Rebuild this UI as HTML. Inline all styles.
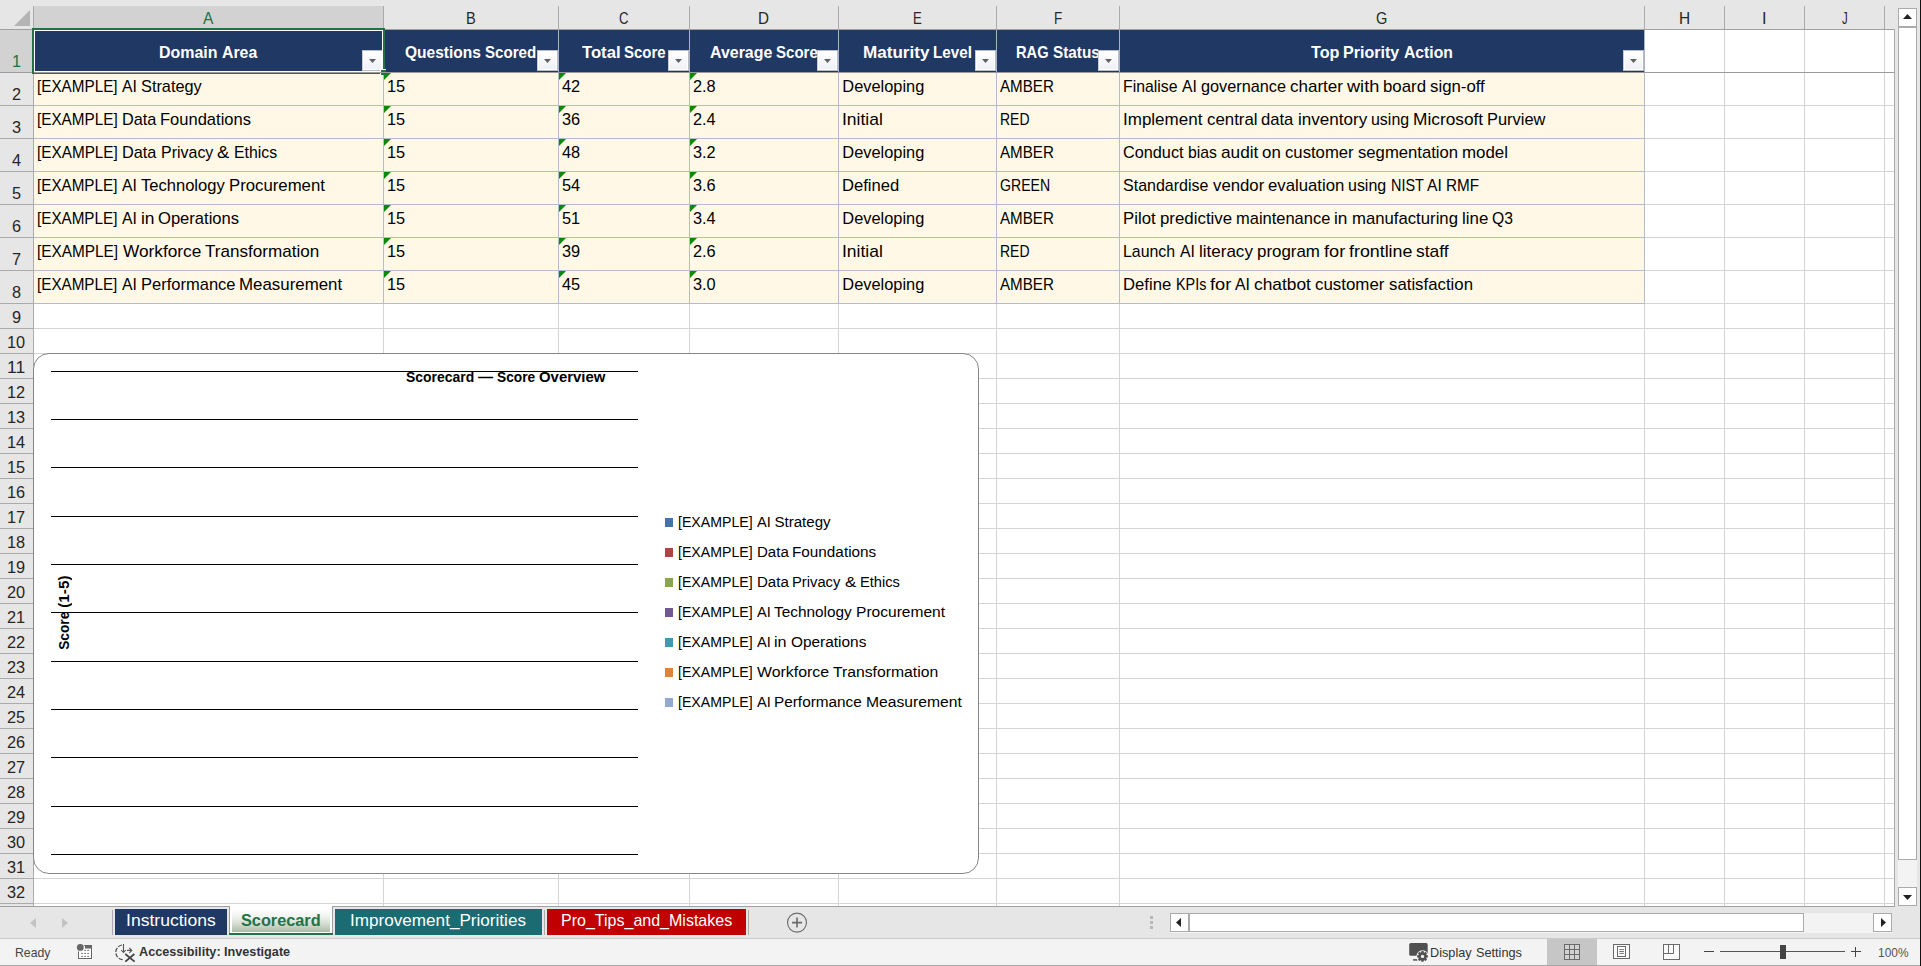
<!DOCTYPE html>
<html lang="en"><head><meta charset="utf-8"><title>Scorecard</title><style>
html,body{margin:0;padding:0}
body{width:1921px;height:966px;overflow:hidden;background:#e6e6e6;position:relative;font-family:"Liberation Sans",sans-serif;}
body>div,body>svg,body>span{position:absolute;display:block}
.t{white-space:nowrap}
.t i{display:inline-block;font-style:normal;transform-origin:0 0}
.fb{width:19px;height:19px;border:1px solid #b5bcc6;border-left-color:#c8ccd2;background:linear-gradient(#fff,#eef0f6);box-shadow:inset 0 0 0 1px #fff}
.sb{background:#fff;border:1px solid #ababab}
</style></head><body>
<div style="left:34px;top:30px;width:1860px;height:876px;background:#fff;"></div>
<div style="left:383px;top:30px;width:1px;height:876px;background:#d4d4d4;"></div>
<div style="left:558px;top:30px;width:1px;height:876px;background:#d4d4d4;"></div>
<div style="left:689px;top:30px;width:1px;height:876px;background:#d4d4d4;"></div>
<div style="left:838px;top:30px;width:1px;height:876px;background:#d4d4d4;"></div>
<div style="left:996px;top:30px;width:1px;height:876px;background:#d4d4d4;"></div>
<div style="left:1119px;top:30px;width:1px;height:876px;background:#d4d4d4;"></div>
<div style="left:1644px;top:30px;width:1px;height:876px;background:#d4d4d4;"></div>
<div style="left:1724px;top:30px;width:1px;height:876px;background:#d4d4d4;"></div>
<div style="left:1804px;top:30px;width:1px;height:876px;background:#d4d4d4;"></div>
<div style="left:1884px;top:30px;width:1px;height:876px;background:#d4d4d4;"></div>
<div style="left:34px;top:72px;width:1860px;height:1px;background:#d4d4d4;"></div>
<div style="left:34px;top:105px;width:1860px;height:1px;background:#d4d4d4;"></div>
<div style="left:34px;top:138px;width:1860px;height:1px;background:#d4d4d4;"></div>
<div style="left:34px;top:171px;width:1860px;height:1px;background:#d4d4d4;"></div>
<div style="left:34px;top:204px;width:1860px;height:1px;background:#d4d4d4;"></div>
<div style="left:34px;top:237px;width:1860px;height:1px;background:#d4d4d4;"></div>
<div style="left:34px;top:270px;width:1860px;height:1px;background:#d4d4d4;"></div>
<div style="left:34px;top:303px;width:1860px;height:1px;background:#d4d4d4;"></div>
<div style="left:34px;top:328px;width:1860px;height:1px;background:#d4d4d4;"></div>
<div style="left:34px;top:353px;width:1860px;height:1px;background:#d4d4d4;"></div>
<div style="left:34px;top:378px;width:1860px;height:1px;background:#d4d4d4;"></div>
<div style="left:34px;top:403px;width:1860px;height:1px;background:#d4d4d4;"></div>
<div style="left:34px;top:428px;width:1860px;height:1px;background:#d4d4d4;"></div>
<div style="left:34px;top:453px;width:1860px;height:1px;background:#d4d4d4;"></div>
<div style="left:34px;top:478px;width:1860px;height:1px;background:#d4d4d4;"></div>
<div style="left:34px;top:503px;width:1860px;height:1px;background:#d4d4d4;"></div>
<div style="left:34px;top:528px;width:1860px;height:1px;background:#d4d4d4;"></div>
<div style="left:34px;top:553px;width:1860px;height:1px;background:#d4d4d4;"></div>
<div style="left:34px;top:578px;width:1860px;height:1px;background:#d4d4d4;"></div>
<div style="left:34px;top:603px;width:1860px;height:1px;background:#d4d4d4;"></div>
<div style="left:34px;top:628px;width:1860px;height:1px;background:#d4d4d4;"></div>
<div style="left:34px;top:653px;width:1860px;height:1px;background:#d4d4d4;"></div>
<div style="left:34px;top:678px;width:1860px;height:1px;background:#d4d4d4;"></div>
<div style="left:34px;top:703px;width:1860px;height:1px;background:#d4d4d4;"></div>
<div style="left:34px;top:728px;width:1860px;height:1px;background:#d4d4d4;"></div>
<div style="left:34px;top:753px;width:1860px;height:1px;background:#d4d4d4;"></div>
<div style="left:34px;top:778px;width:1860px;height:1px;background:#d4d4d4;"></div>
<div style="left:34px;top:803px;width:1860px;height:1px;background:#d4d4d4;"></div>
<div style="left:34px;top:828px;width:1860px;height:1px;background:#d4d4d4;"></div>
<div style="left:34px;top:853px;width:1860px;height:1px;background:#d4d4d4;"></div>
<div style="left:34px;top:878px;width:1860px;height:1px;background:#d4d4d4;"></div>
<div style="left:34px;top:903px;width:1860px;height:1px;background:#d4d4d4;"></div>
<div style="left:0px;top:0px;width:1921px;height:29px;background:#e6e6e6;"></div>
<div style="left:34px;top:6px;width:349px;height:23px;background:#d2d2d2;"></div>
<div style="left:383px;top:6px;width:1px;height:23px;background:#ababab;"></div>
<div style="left:558px;top:6px;width:1px;height:23px;background:#ababab;"></div>
<div style="left:689px;top:6px;width:1px;height:23px;background:#ababab;"></div>
<div style="left:838px;top:6px;width:1px;height:23px;background:#ababab;"></div>
<div style="left:996px;top:6px;width:1px;height:23px;background:#ababab;"></div>
<div style="left:1119px;top:6px;width:1px;height:23px;background:#ababab;"></div>
<div style="left:1644px;top:6px;width:1px;height:23px;background:#ababab;"></div>
<div style="left:1724px;top:6px;width:1px;height:23px;background:#ababab;"></div>
<div style="left:1804px;top:6px;width:1px;height:23px;background:#ababab;"></div>
<div style="left:1884px;top:6px;width:1px;height:23px;background:#ababab;"></div>
<div style="left:0px;top:29px;width:1894px;height:1px;background:#a0a0a0;"></div>
<div style="left:0px;top:30px;width:33px;height:876px;background:#e6e6e6;"></div>
<div style="left:0px;top:30px;width:33px;height:42px;background:#d2d2d2;"></div>
<div style="left:33px;top:6px;width:1px;height:900px;background:#ababab;"></div>
<div style="left:0px;top:72px;width:33px;height:1px;background:#ababab;"></div>
<div style="left:0px;top:105px;width:33px;height:1px;background:#ababab;"></div>
<div style="left:0px;top:138px;width:33px;height:1px;background:#ababab;"></div>
<div style="left:0px;top:171px;width:33px;height:1px;background:#ababab;"></div>
<div style="left:0px;top:204px;width:33px;height:1px;background:#ababab;"></div>
<div style="left:0px;top:237px;width:33px;height:1px;background:#ababab;"></div>
<div style="left:0px;top:270px;width:33px;height:1px;background:#ababab;"></div>
<div style="left:0px;top:303px;width:33px;height:1px;background:#ababab;"></div>
<div style="left:0px;top:328px;width:33px;height:1px;background:#ababab;"></div>
<div style="left:0px;top:353px;width:33px;height:1px;background:#ababab;"></div>
<div style="left:0px;top:378px;width:33px;height:1px;background:#ababab;"></div>
<div style="left:0px;top:403px;width:33px;height:1px;background:#ababab;"></div>
<div style="left:0px;top:428px;width:33px;height:1px;background:#ababab;"></div>
<div style="left:0px;top:453px;width:33px;height:1px;background:#ababab;"></div>
<div style="left:0px;top:478px;width:33px;height:1px;background:#ababab;"></div>
<div style="left:0px;top:503px;width:33px;height:1px;background:#ababab;"></div>
<div style="left:0px;top:528px;width:33px;height:1px;background:#ababab;"></div>
<div style="left:0px;top:553px;width:33px;height:1px;background:#ababab;"></div>
<div style="left:0px;top:578px;width:33px;height:1px;background:#ababab;"></div>
<div style="left:0px;top:603px;width:33px;height:1px;background:#ababab;"></div>
<div style="left:0px;top:628px;width:33px;height:1px;background:#ababab;"></div>
<div style="left:0px;top:653px;width:33px;height:1px;background:#ababab;"></div>
<div style="left:0px;top:678px;width:33px;height:1px;background:#ababab;"></div>
<div style="left:0px;top:703px;width:33px;height:1px;background:#ababab;"></div>
<div style="left:0px;top:728px;width:33px;height:1px;background:#ababab;"></div>
<div style="left:0px;top:753px;width:33px;height:1px;background:#ababab;"></div>
<div style="left:0px;top:778px;width:33px;height:1px;background:#ababab;"></div>
<div style="left:0px;top:803px;width:33px;height:1px;background:#ababab;"></div>
<div style="left:0px;top:828px;width:33px;height:1px;background:#ababab;"></div>
<div style="left:0px;top:853px;width:33px;height:1px;background:#ababab;"></div>
<div style="left:0px;top:878px;width:33px;height:1px;background:#ababab;"></div>
<div style="left:0px;top:903px;width:33px;height:1px;background:#ababab;"></div>
<svg style="left:14px;top:10px" width="17" height="17" viewBox="0 0 17 17"><path d="M16 0V16H0Z" fill="#b4b4b4"/></svg>
<span class="t" style="left:203.32px;top:8.32px;font-size:16.4px;line-height:20px;color:#217346;"><i style="width:10.37px;transform:scaleX(0.9480)">A</i></span>
<span class="t" style="left:466.13px;top:8.32px;font-size:16.4px;line-height:20px;color:#262626;"><i style="width:9.75px;transform:scaleX(0.8912)">B</i></span>
<span class="t" style="left:619.22px;top:8.32px;font-size:16.4px;line-height:20px;color:#262626;"><i style="width:9.56px;transform:scaleX(0.8068)">C</i></span>
<span class="t" style="left:758.49px;top:8.32px;font-size:16.4px;line-height:20px;color:#262626;"><i style="width:11.03px;transform:scaleX(0.9309)">D</i></span>
<span class="t" style="left:913.12px;top:8.32px;font-size:16.4px;line-height:20px;color:#262626;"><i style="width:8.75px;transform:scaleX(0.8000)">E</i></span>
<span class="t" style="left:1053.88px;top:8.32px;font-size:16.4px;line-height:20px;color:#262626;"><i style="width:8.23px;transform:scaleX(0.8221)">F</i></span>
<span class="t" style="left:1376.35px;top:8.32px;font-size:16.4px;line-height:20px;color:#262626;"><i style="width:11.31px;transform:scaleX(0.8867)">G</i></span>
<span class="t" style="left:1678.92px;top:8.32px;font-size:16.4px;line-height:20px;color:#262626;"><i style="width:11.17px;transform:scaleX(0.9427)">H</i></span>
<span class="t" style="left:1762.24px;top:8.32px;font-size:16.4px;line-height:20px;color:#262626;"><i style="width:4.52px;transform:scaleX(0.9896)">I</i></span>
<span class="t" style="left:1841.64px;top:8.32px;font-size:16.4px;line-height:20px;color:#262626;"><i style="width:5.71px;transform:scaleX(0.6965)">J</i></span>
<span class="t" style="left:11.96px;top:51.32px;font-size:16.4px;line-height:20px;color:#217346;"><i style="width:9.08px;transform:scaleX(0.9953)">1</i></span>
<span class="t" style="left:11.96px;top:84.32px;font-size:16.4px;line-height:20px;color:#262626;"><i style="width:9.08px;transform:scaleX(0.9953)">2</i></span>
<span class="t" style="left:11.96px;top:117.32px;font-size:16.4px;line-height:20px;color:#262626;"><i style="width:9.08px;transform:scaleX(0.9953)">3</i></span>
<span class="t" style="left:11.96px;top:150.32px;font-size:16.4px;line-height:20px;color:#262626;"><i style="width:9.08px;transform:scaleX(0.9953)">4</i></span>
<span class="t" style="left:11.96px;top:183.32px;font-size:16.4px;line-height:20px;color:#262626;"><i style="width:9.08px;transform:scaleX(0.9953)">5</i></span>
<span class="t" style="left:11.96px;top:216.32px;font-size:16.4px;line-height:20px;color:#262626;"><i style="width:9.08px;transform:scaleX(0.9953)">6</i></span>
<span class="t" style="left:11.96px;top:249.32px;font-size:16.4px;line-height:20px;color:#262626;"><i style="width:9.08px;transform:scaleX(0.9953)">7</i></span>
<span class="t" style="left:11.96px;top:282.32px;font-size:16.4px;line-height:20px;color:#262626;"><i style="width:9.08px;transform:scaleX(0.9953)">8</i></span>
<span class="t" style="left:11.96px;top:307.32px;font-size:16.4px;line-height:20px;color:#262626;"><i style="width:9.08px;transform:scaleX(0.9953)">9</i></span>
<span class="t" style="left:7.42px;top:332.32px;font-size:16.4px;line-height:20px;color:#262626;"><i style="width:18.17px;transform:scaleX(0.9962)">10</i></span>
<span class="t" style="left:7.42px;top:357.32px;font-size:16.4px;line-height:20px;color:#262626;"><i style="width:18.17px;transform:scaleX(1.0675)">11</i></span>
<span class="t" style="left:7.42px;top:382.32px;font-size:16.4px;line-height:20px;color:#262626;"><i style="width:18.17px;transform:scaleX(0.9962)">12</i></span>
<span class="t" style="left:7.42px;top:407.32px;font-size:16.4px;line-height:20px;color:#262626;"><i style="width:18.17px;transform:scaleX(0.9962)">13</i></span>
<span class="t" style="left:7.42px;top:432.32px;font-size:16.4px;line-height:20px;color:#262626;"><i style="width:18.17px;transform:scaleX(0.9962)">14</i></span>
<span class="t" style="left:7.42px;top:457.32px;font-size:16.4px;line-height:20px;color:#262626;"><i style="width:18.17px;transform:scaleX(0.9962)">15</i></span>
<span class="t" style="left:7.42px;top:482.32px;font-size:16.4px;line-height:20px;color:#262626;"><i style="width:18.17px;transform:scaleX(0.9962)">16</i></span>
<span class="t" style="left:7.42px;top:507.32px;font-size:16.4px;line-height:20px;color:#262626;"><i style="width:18.17px;transform:scaleX(0.9962)">17</i></span>
<span class="t" style="left:7.42px;top:532.32px;font-size:16.4px;line-height:20px;color:#262626;"><i style="width:18.17px;transform:scaleX(0.9962)">18</i></span>
<span class="t" style="left:7.42px;top:557.32px;font-size:16.4px;line-height:20px;color:#262626;"><i style="width:18.17px;transform:scaleX(0.9962)">19</i></span>
<span class="t" style="left:7.42px;top:582.32px;font-size:16.4px;line-height:20px;color:#262626;"><i style="width:18.17px;transform:scaleX(0.9962)">20</i></span>
<span class="t" style="left:7.42px;top:607.32px;font-size:16.4px;line-height:20px;color:#262626;"><i style="width:18.17px;transform:scaleX(0.9962)">21</i></span>
<span class="t" style="left:7.42px;top:632.32px;font-size:16.4px;line-height:20px;color:#262626;"><i style="width:18.17px;transform:scaleX(0.9962)">22</i></span>
<span class="t" style="left:7.42px;top:657.32px;font-size:16.4px;line-height:20px;color:#262626;"><i style="width:18.17px;transform:scaleX(0.9962)">23</i></span>
<span class="t" style="left:7.42px;top:682.32px;font-size:16.4px;line-height:20px;color:#262626;"><i style="width:18.17px;transform:scaleX(0.9962)">24</i></span>
<span class="t" style="left:7.42px;top:707.32px;font-size:16.4px;line-height:20px;color:#262626;"><i style="width:18.17px;transform:scaleX(0.9962)">25</i></span>
<span class="t" style="left:7.42px;top:732.32px;font-size:16.4px;line-height:20px;color:#262626;"><i style="width:18.17px;transform:scaleX(0.9962)">26</i></span>
<span class="t" style="left:7.42px;top:757.32px;font-size:16.4px;line-height:20px;color:#262626;"><i style="width:18.17px;transform:scaleX(0.9962)">27</i></span>
<span class="t" style="left:7.42px;top:782.32px;font-size:16.4px;line-height:20px;color:#262626;"><i style="width:18.17px;transform:scaleX(0.9962)">28</i></span>
<span class="t" style="left:7.42px;top:807.32px;font-size:16.4px;line-height:20px;color:#262626;"><i style="width:18.17px;transform:scaleX(0.9962)">29</i></span>
<span class="t" style="left:7.42px;top:832.32px;font-size:16.4px;line-height:20px;color:#262626;"><i style="width:18.17px;transform:scaleX(0.9962)">30</i></span>
<span class="t" style="left:7.42px;top:857.32px;font-size:16.4px;line-height:20px;color:#262626;"><i style="width:18.17px;transform:scaleX(0.9962)">31</i></span>
<span class="t" style="left:7.42px;top:882.32px;font-size:16.4px;line-height:20px;color:#262626;"><i style="width:18.17px;transform:scaleX(0.9962)">32</i></span>
<div style="left:34px;top:30px;width:1610px;height:42px;background:#1f3864;"></div>
<div style="left:383px;top:30px;width:1px;height:42px;background:#aab2c4;"></div>
<div style="left:558px;top:30px;width:1px;height:42px;background:#aab2c4;"></div>
<div style="left:689px;top:30px;width:1px;height:42px;background:#aab2c4;"></div>
<div style="left:838px;top:30px;width:1px;height:42px;background:#aab2c4;"></div>
<div style="left:996px;top:30px;width:1px;height:42px;background:#aab2c4;"></div>
<div style="left:1119px;top:30px;width:1px;height:42px;background:#aab2c4;"></div>
<div style="left:1644px;top:30px;width:1px;height:42px;background:#aab2c4;"></div>
<div style="left:34px;top:73px;width:1610px;height:230px;background:#fff8e6;"></div>
<div style="left:383px;top:73px;width:1px;height:231px;background:#b4bcc9;"></div>
<div style="left:558px;top:73px;width:1px;height:231px;background:#b4bcc9;"></div>
<div style="left:689px;top:73px;width:1px;height:231px;background:#b4bcc9;"></div>
<div style="left:838px;top:73px;width:1px;height:231px;background:#b4bcc9;"></div>
<div style="left:996px;top:73px;width:1px;height:231px;background:#b4bcc9;"></div>
<div style="left:1119px;top:73px;width:1px;height:231px;background:#b4bcc9;"></div>
<div style="left:1644px;top:73px;width:1px;height:231px;background:#b4bcc9;"></div>
<div style="left:34px;top:105px;width:1611px;height:1px;background:#b4bcc9;"></div>
<div style="left:34px;top:138px;width:1611px;height:1px;background:#b4bcc9;"></div>
<div style="left:34px;top:171px;width:1611px;height:1px;background:#b4bcc9;"></div>
<div style="left:34px;top:204px;width:1611px;height:1px;background:#b4bcc9;"></div>
<div style="left:34px;top:237px;width:1611px;height:1px;background:#b4bcc9;"></div>
<div style="left:34px;top:270px;width:1611px;height:1px;background:#b4bcc9;"></div>
<div style="left:34px;top:303px;width:1611px;height:1px;background:#b4bcc9;"></div>
<div style="left:34px;top:72px;width:1860px;height:1px;background:#9b9b9b;"></div>
<div style="left:0px;top:72px;width:33px;height:1px;background:#9b9b9b;"></div>
<span class="t" style="left:159.30px;top:42.32px;font-size:16.4px;line-height:20px;color:#fff;font-weight:bold;word-spacing:-0.50px;"><i style="width:58.54px;transform:scaleX(0.9739)">Domain</i> <i style="width:35.20px;transform:scaleX(0.9656)">Area</i></span>
<div class="fb" style="left:362px;top:50px"></div>
<svg style="left:369px;top:59px" width="7" height="4" viewBox="0 0 7 4"><path d="M0 0H7L3.5 4Z" fill="#606060"/></svg>
<span class="t" style="left:405.10px;top:42.32px;font-size:16.4px;line-height:20px;color:#fff;font-weight:bold;word-spacing:-0.46px;"><i style="width:75.93px;transform:scaleX(0.9473)">Questions</i> <i style="width:51.17px;transform:scaleX(0.9208)">Scored</i></span>
<div class="fb" style="left:537px;top:50px"></div>
<svg style="left:544px;top:59px" width="7" height="4" viewBox="0 0 7 4"><path d="M0 0H7L3.5 4Z" fill="#606060"/></svg>
<span class="t" style="left:581.55px;top:42.32px;font-size:16.4px;line-height:20px;color:#fff;font-weight:bold;word-spacing:-0.45px;"><i style="width:38.56px;transform:scaleX(1.0163)">Total</i> <i style="width:41.63px;transform:scaleX(0.9137)">Score</i></span>
<div class="fb" style="left:668px;top:50px"></div>
<svg style="left:675px;top:59px" width="7" height="4" viewBox="0 0 7 4"><path d="M0 0H7L3.5 4Z" fill="#606060"/></svg>
<span class="t" style="left:709.60px;top:42.32px;font-size:16.4px;line-height:20px;color:#fff;font-weight:bold;word-spacing:-0.43px;"><i style="width:62.28px;transform:scaleX(0.9717)">Average</i> <i style="width:41.79px;transform:scaleX(0.9172)">Score</i></span>
<div class="fb" style="left:817px;top:50px"></div>
<svg style="left:824px;top:59px" width="7" height="4" viewBox="0 0 7 4"><path d="M0 0H7L3.5 4Z" fill="#606060"/></svg>
<span class="t" style="left:862.50px;top:42.32px;font-size:16.4px;line-height:20px;color:#fff;font-weight:bold;word-spacing:-0.47px;"><i style="width:66.44px;transform:scaleX(1.0422)">Maturity</i> <i style="width:38.87px;transform:scaleX(0.9272)">Level</i></span>
<div class="fb" style="left:975px;top:50px"></div>
<svg style="left:982px;top:59px" width="7" height="4" viewBox="0 0 7 4"><path d="M0 0H7L3.5 4Z" fill="#606060"/></svg>
<span class="t" style="left:1016.00px;top:42.32px;font-size:16.4px;line-height:20px;color:#fff;font-weight:bold;word-spacing:-0.48px;"><i style="width:32.55px;transform:scaleX(0.8934)">RAG</i> <i style="width:46.77px;transform:scaleX(0.9337)">Status</i></span>
<div class="fb" style="left:1098px;top:50px"></div>
<svg style="left:1105px;top:59px" width="7" height="4" viewBox="0 0 7 4"><path d="M0 0H7L3.5 4Z" fill="#606060"/></svg>
<span class="t" style="left:1310.85px;top:42.32px;font-size:16.4px;line-height:20px;color:#fff;font-weight:bold;word-spacing:-0.45px;"><i style="width:28.49px;transform:scaleX(0.9884)">Top</i> <i style="width:56.14px;transform:scaleX(0.9783)">Priority</i> <i style="width:48.86px;transform:scaleX(0.9580)">Action</i></span>
<div class="fb" style="left:1623px;top:50px"></div>
<svg style="left:1630px;top:59px" width="7" height="4" viewBox="0 0 7 4"><path d="M0 0H7L3.5 4Z" fill="#606060"/></svg>
<span class="t" style="left:37.30px;top:76.32px;font-size:16.4px;line-height:20px;color:#000;word-spacing:-0.49px;"><i style="width:80.57px;transform:scaleX(0.9310)">[EXAMPLE]</i> <i style="width:14.94px;transform:scaleX(0.9638)">AI</i> <i style="width:60.76px;transform:scaleX(0.9953)">Strategy</i></span>
<span class="t" style="left:387.30px;top:76.32px;font-size:16.4px;line-height:20px;color:#000;"><i style="width:18.17px;transform:scaleX(0.9962)">15</i></span>
<svg style="left:384px;top:73px" width="7" height="7" viewBox="0 0 7 7"><path d="M0 0H7L0 7Z" fill="#0a8a0a"/></svg>
<span class="t" style="left:562.30px;top:76.32px;font-size:16.4px;line-height:20px;color:#000;"><i style="width:18.17px;transform:scaleX(0.9962)">42</i></span>
<svg style="left:559px;top:73px" width="7" height="7" viewBox="0 0 7 7"><path d="M0 0H7L0 7Z" fill="#0a8a0a"/></svg>
<span class="t" style="left:693.30px;top:76.32px;font-size:16.4px;line-height:20px;color:#000;"><i style="width:22.69px;transform:scaleX(0.9953)">2.8</i></span>
<svg style="left:690px;top:73px" width="7" height="7" viewBox="0 0 7 7"><path d="M0 0H7L0 7Z" fill="#0a8a0a"/></svg>
<span class="t" style="left:842.30px;top:76.32px;font-size:16.4px;line-height:20px;color:#000;"><i style="width:81.89px;">Developing</i></span>
<span class="t" style="left:1000.30px;top:76.32px;font-size:16.4px;line-height:20px;color:#000;"><i style="width:53.92px;transform:scaleX(0.9249)">AMBER</i></span>
<span class="t" style="left:1123.30px;top:76.32px;font-size:16.4px;line-height:20px;color:#000;word-spacing:-0.51px;"><i style="width:54.45px;transform:scaleX(0.9639)">Finalise</i> <i style="width:14.87px;transform:scaleX(0.9594)">AI</i> <i style="width:84.97px;transform:scaleX(0.9919)">governance</i> <i style="width:52.94px;transform:scaleX(1.0378)">charter</i> <i style="width:32.31px;transform:scaleX(1.1082)">with</i> <i style="width:43.07px;transform:scaleX(1.0275)">board</i> <i style="width:54.80px;transform:scaleX(1.0248)">sign-off</i></span>
<span class="t" style="left:37.30px;top:109.32px;font-size:16.4px;line-height:20px;color:#000;word-spacing:-0.49px;"><i style="width:80.66px;transform:scaleX(0.9320)">[EXAMPLE]</i> <i style="width:34.36px;transform:scaleX(0.9923)">Data</i> <i style="width:90.94px;transform:scaleX(1.0080)">Foundations</i></span>
<span class="t" style="left:387.30px;top:109.32px;font-size:16.4px;line-height:20px;color:#000;"><i style="width:18.17px;transform:scaleX(0.9962)">15</i></span>
<svg style="left:384px;top:106px" width="7" height="7" viewBox="0 0 7 7"><path d="M0 0H7L0 7Z" fill="#0a8a0a"/></svg>
<span class="t" style="left:562.30px;top:109.32px;font-size:16.4px;line-height:20px;color:#000;"><i style="width:18.17px;transform:scaleX(0.9962)">36</i></span>
<svg style="left:559px;top:106px" width="7" height="7" viewBox="0 0 7 7"><path d="M0 0H7L0 7Z" fill="#0a8a0a"/></svg>
<span class="t" style="left:693.30px;top:109.32px;font-size:16.4px;line-height:20px;color:#000;"><i style="width:22.69px;transform:scaleX(0.9953)">2.4</i></span>
<svg style="left:690px;top:106px" width="7" height="7" viewBox="0 0 7 7"><path d="M0 0H7L0 7Z" fill="#0a8a0a"/></svg>
<span class="t" style="left:842.30px;top:109.32px;font-size:16.4px;line-height:20px;color:#000;"><i style="width:40.85px;transform:scaleX(1.0676)">Initial</i></span>
<span class="t" style="left:1000.30px;top:109.32px;font-size:16.4px;line-height:20px;color:#000;"><i style="width:29.51px;transform:scaleX(0.8525)">RED</i></span>
<span class="t" style="left:1123.30px;top:109.32px;font-size:16.4px;line-height:20px;color:#000;word-spacing:-0.54px;"><i style="width:79.38px;transform:scaleX(1.0372)">Implement</i> <i style="width:50.51px;transform:scaleX(1.0265)">central</i> <i style="width:32.36px;transform:scaleX(1.0143)">data</i> <i style="width:69.29px;transform:scaleX(1.0417)">inventory</i> <i style="width:38.12px;transform:scaleX(0.9728)">using</i> <i style="width:70.16px;transform:scaleX(1.0552)">Microsoft</i> <i style="width:58.45px;transform:scaleX(1.0026)">Purview</i></span>
<span class="t" style="left:37.30px;top:142.32px;font-size:16.4px;line-height:20px;color:#000;word-spacing:-0.48px;"><i style="width:80.83px;transform:scaleX(0.9340)">[EXAMPLE]</i> <i style="width:34.43px;transform:scaleX(0.9945)">Data</i> <i style="width:52.35px;transform:scaleX(0.9742)">Privacy</i> <i style="width:12.31px;transform:scaleX(1.1254)">&amp;</i> <i style="width:43.16px;transform:scaleX(0.9669)">Ethics</i></span>
<span class="t" style="left:387.30px;top:142.32px;font-size:16.4px;line-height:20px;color:#000;"><i style="width:18.17px;transform:scaleX(0.9962)">15</i></span>
<svg style="left:384px;top:139px" width="7" height="7" viewBox="0 0 7 7"><path d="M0 0H7L0 7Z" fill="#0a8a0a"/></svg>
<span class="t" style="left:562.30px;top:142.32px;font-size:16.4px;line-height:20px;color:#000;"><i style="width:18.17px;transform:scaleX(0.9962)">48</i></span>
<svg style="left:559px;top:139px" width="7" height="7" viewBox="0 0 7 7"><path d="M0 0H7L0 7Z" fill="#0a8a0a"/></svg>
<span class="t" style="left:693.30px;top:142.32px;font-size:16.4px;line-height:20px;color:#000;"><i style="width:22.69px;transform:scaleX(0.9953)">3.2</i></span>
<svg style="left:690px;top:139px" width="7" height="7" viewBox="0 0 7 7"><path d="M0 0H7L0 7Z" fill="#0a8a0a"/></svg>
<span class="t" style="left:842.30px;top:142.32px;font-size:16.4px;line-height:20px;color:#000;"><i style="width:81.89px;">Developing</i></span>
<span class="t" style="left:1000.30px;top:142.32px;font-size:16.4px;line-height:20px;color:#000;"><i style="width:53.92px;transform:scaleX(0.9249)">AMBER</i></span>
<span class="t" style="left:1123.30px;top:142.32px;font-size:16.4px;line-height:20px;color:#000;word-spacing:-0.53px;"><i style="width:60.57px;transform:scaleX(0.9919)">Conduct</i> <i style="width:28.99px;transform:scaleX(0.9640)">bias</i> <i style="width:37.37px;transform:scaleX(1.0512)">audit</i> <i style="width:18.78px;transform:scaleX(1.0301)">on</i> <i style="width:68.64px;transform:scaleX(1.0182)">customer</i> <i style="width:100.14px;transform:scaleX(1.0174)">segmentation</i> <i style="width:46.01px;transform:scaleX(1.0303)">model</i></span>
<span class="t" style="left:37.30px;top:175.32px;font-size:16.4px;line-height:20px;color:#000;word-spacing:-0.50px;"><i style="width:80.39px;transform:scaleX(0.9288)">[EXAMPLE]</i> <i style="width:14.91px;transform:scaleX(0.9616)">AI</i> <i style="width:83.74px;transform:scaleX(1.0098)">Technology</i> <i style="width:95.90px;transform:scaleX(1.0219)">Procurement</i></span>
<span class="t" style="left:387.30px;top:175.32px;font-size:16.4px;line-height:20px;color:#000;"><i style="width:18.17px;transform:scaleX(0.9962)">15</i></span>
<svg style="left:384px;top:172px" width="7" height="7" viewBox="0 0 7 7"><path d="M0 0H7L0 7Z" fill="#0a8a0a"/></svg>
<span class="t" style="left:562.30px;top:175.32px;font-size:16.4px;line-height:20px;color:#000;"><i style="width:18.17px;transform:scaleX(0.9962)">54</i></span>
<svg style="left:559px;top:172px" width="7" height="7" viewBox="0 0 7 7"><path d="M0 0H7L0 7Z" fill="#0a8a0a"/></svg>
<span class="t" style="left:693.30px;top:175.32px;font-size:16.4px;line-height:20px;color:#000;"><i style="width:22.69px;transform:scaleX(0.9953)">3.6</i></span>
<svg style="left:690px;top:172px" width="7" height="7" viewBox="0 0 7 7"><path d="M0 0H7L0 7Z" fill="#0a8a0a"/></svg>
<span class="t" style="left:842.30px;top:175.32px;font-size:16.4px;line-height:20px;color:#000;"><i style="width:57.27px;transform:scaleX(1.0136)">Defined</i></span>
<span class="t" style="left:1000.30px;top:175.32px;font-size:16.4px;line-height:20px;color:#000;"><i style="width:50.10px;transform:scaleX(0.8594)">GREEN</i></span>
<span class="t" style="left:1123.30px;top:175.32px;font-size:16.4px;line-height:20px;color:#000;word-spacing:-0.53px;"><i style="width:85.46px;transform:scaleX(0.9769)">Standardise</i> <i style="width:51.25px;transform:scaleX(1.0225)">vendor</i> <i style="width:76.26px;transform:scaleX(1.0205)">evaluation</i> <i style="width:38.18px;transform:scaleX(0.9742)">using</i> <i style="width:32.87px;transform:scaleX(0.8801)">NIST</i> <i style="width:14.80px;transform:scaleX(0.9550)">AI</i> <i style="width:33.10px;transform:scaleX(0.9320)">RMF</i></span>
<span class="t" style="left:37.30px;top:208.32px;font-size:16.4px;line-height:20px;color:#000;word-spacing:-0.50px;"><i style="width:80.37px;transform:scaleX(0.9286)">[EXAMPLE]</i> <i style="width:14.90px;transform:scaleX(0.9614)">AI</i> <i style="width:13.54px;transform:scaleX(1.0610)">in</i> <i style="width:81.12px;transform:scaleX(1.0116)">Operations</i></span>
<span class="t" style="left:387.30px;top:208.32px;font-size:16.4px;line-height:20px;color:#000;"><i style="width:18.17px;transform:scaleX(0.9962)">15</i></span>
<svg style="left:384px;top:205px" width="7" height="7" viewBox="0 0 7 7"><path d="M0 0H7L0 7Z" fill="#0a8a0a"/></svg>
<span class="t" style="left:562.30px;top:208.32px;font-size:16.4px;line-height:20px;color:#000;"><i style="width:18.17px;transform:scaleX(0.9962)">51</i></span>
<svg style="left:559px;top:205px" width="7" height="7" viewBox="0 0 7 7"><path d="M0 0H7L0 7Z" fill="#0a8a0a"/></svg>
<span class="t" style="left:693.30px;top:208.32px;font-size:16.4px;line-height:20px;color:#000;"><i style="width:22.69px;transform:scaleX(0.9953)">3.4</i></span>
<svg style="left:690px;top:205px" width="7" height="7" viewBox="0 0 7 7"><path d="M0 0H7L0 7Z" fill="#0a8a0a"/></svg>
<span class="t" style="left:842.30px;top:208.32px;font-size:16.4px;line-height:20px;color:#000;"><i style="width:81.89px;">Developing</i></span>
<span class="t" style="left:1000.30px;top:208.32px;font-size:16.4px;line-height:20px;color:#000;"><i style="width:53.92px;transform:scaleX(0.9249)">AMBER</i></span>
<span class="t" style="left:1123.30px;top:208.32px;font-size:16.4px;line-height:20px;color:#000;word-spacing:-0.55px;"><i style="width:32.62px;transform:scaleX(1.0227)">Pilot</i> <i style="width:72.10px;transform:scaleX(1.0278)">predictive</i> <i style="width:94.33px;transform:scaleX(1.0050)">maintenance</i> <i style="width:13.40px;transform:scaleX(1.0494)">in</i> <i style="width:105.95px;transform:scaleX(1.0200)">manufacturing</i> <i style="width:26.30px;transform:scaleX(1.0307)">line</i> <i style="width:20.94px;transform:scaleX(0.9570)">Q3</i></span>
<span class="t" style="left:37.30px;top:241.32px;font-size:16.4px;line-height:20px;color:#000;word-spacing:-0.46px;"><i style="width:81.15px;transform:scaleX(0.9376)">[EXAMPLE]</i> <i style="width:78.29px;transform:scaleX(1.0524)">Workforce</i> <i style="width:114.27px;transform:scaleX(1.0423)">Transformation</i></span>
<span class="t" style="left:387.30px;top:241.32px;font-size:16.4px;line-height:20px;color:#000;"><i style="width:18.17px;transform:scaleX(0.9962)">15</i></span>
<svg style="left:384px;top:238px" width="7" height="7" viewBox="0 0 7 7"><path d="M0 0H7L0 7Z" fill="#0a8a0a"/></svg>
<span class="t" style="left:562.30px;top:241.32px;font-size:16.4px;line-height:20px;color:#000;"><i style="width:18.17px;transform:scaleX(0.9962)">39</i></span>
<svg style="left:559px;top:238px" width="7" height="7" viewBox="0 0 7 7"><path d="M0 0H7L0 7Z" fill="#0a8a0a"/></svg>
<span class="t" style="left:693.30px;top:241.32px;font-size:16.4px;line-height:20px;color:#000;"><i style="width:22.69px;transform:scaleX(0.9953)">2.6</i></span>
<svg style="left:690px;top:238px" width="7" height="7" viewBox="0 0 7 7"><path d="M0 0H7L0 7Z" fill="#0a8a0a"/></svg>
<span class="t" style="left:842.30px;top:241.32px;font-size:16.4px;line-height:20px;color:#000;"><i style="width:40.85px;transform:scaleX(1.0676)">Initial</i></span>
<span class="t" style="left:1000.30px;top:241.32px;font-size:16.4px;line-height:20px;color:#000;"><i style="width:29.51px;transform:scaleX(0.8525)">RED</i></span>
<span class="t" style="left:1123.30px;top:241.32px;font-size:16.4px;line-height:20px;color:#000;word-spacing:-0.49px;"><i style="width:52.16px;transform:scaleX(0.9699)">Launch</i> <i style="width:14.95px;transform:scaleX(0.9643)">AI</i> <i style="width:53.89px;transform:scaleX(1.0379)">literacy</i> <i style="width:62.96px;transform:scaleX(1.0313)">program</i> <i style="width:21.26px;transform:scaleX(1.1105)">for</i> <i style="width:63.41px;transform:scaleX(1.0874)">frontline</i> <i style="width:32.67px;transform:scaleX(1.0646)">staff</i></span>
<span class="t" style="left:37.30px;top:274.32px;font-size:16.4px;line-height:20px;color:#000;word-spacing:-0.50px;"><i style="width:80.36px;transform:scaleX(0.9285)">[EXAMPLE]</i> <i style="width:14.90px;transform:scaleX(0.9613)">AI</i> <i style="width:94.50px;transform:scaleX(1.0070)">Performance</i> <i style="width:103.17px;transform:scaleX(1.0295)">Measurement</i></span>
<span class="t" style="left:387.30px;top:274.32px;font-size:16.4px;line-height:20px;color:#000;"><i style="width:18.17px;transform:scaleX(0.9962)">15</i></span>
<svg style="left:384px;top:271px" width="7" height="7" viewBox="0 0 7 7"><path d="M0 0H7L0 7Z" fill="#0a8a0a"/></svg>
<span class="t" style="left:562.30px;top:274.32px;font-size:16.4px;line-height:20px;color:#000;"><i style="width:18.17px;transform:scaleX(0.9962)">45</i></span>
<svg style="left:559px;top:271px" width="7" height="7" viewBox="0 0 7 7"><path d="M0 0H7L0 7Z" fill="#0a8a0a"/></svg>
<span class="t" style="left:693.30px;top:274.32px;font-size:16.4px;line-height:20px;color:#000;"><i style="width:22.69px;transform:scaleX(0.9953)">3.0</i></span>
<svg style="left:690px;top:271px" width="7" height="7" viewBox="0 0 7 7"><path d="M0 0H7L0 7Z" fill="#0a8a0a"/></svg>
<span class="t" style="left:842.30px;top:274.32px;font-size:16.4px;line-height:20px;color:#000;"><i style="width:81.89px;">Developing</i></span>
<span class="t" style="left:1000.30px;top:274.32px;font-size:16.4px;line-height:20px;color:#000;"><i style="width:53.92px;transform:scaleX(0.9249)">AMBER</i></span>
<span class="t" style="left:1123.30px;top:274.32px;font-size:16.4px;line-height:20px;color:#000;word-spacing:-0.48px;"><i style="width:48.23px;transform:scaleX(1.0176)">Define</i> <i style="width:30.32px;transform:scaleX(0.8758)">KPIs</i> <i style="width:21.33px;transform:scaleX(1.1144)">for</i> <i style="width:15.00px;transform:scaleX(0.9677)">AI</i> <i style="width:56.88px;transform:scaleX(1.0577)">chatbot</i> <i style="width:69.47px;transform:scaleX(1.0306)">customer</i> <i style="width:83.97px;transform:scaleX(1.0241)">satisfaction</i></span>
<div style="left:32px;top:28px;width:349px;height:42px;border:2px solid #217346;box-shadow:inset 0 0 0 1px #fff;"></div>
<div style="left:380px;top:69px;width:6px;height:6px;background:#fff;"></div>
<div style="left:381px;top:70px;width:5px;height:5px;background:#217346;"></div>
<div style="left:34px;top:72px;width:1610px;height:1px;background:#9b9b9b;"></div>
<div style="left:33px;top:353px;width:944px;height:519px;border:1px solid #868686;border-radius:16px;background:#fff"></div>
<div style="left:51px;top:371px;width:587px;height:1px;background:#000;"></div>
<div style="left:51px;top:419px;width:587px;height:1px;background:#000;"></div>
<div style="left:51px;top:467px;width:587px;height:1px;background:#000;"></div>
<div style="left:51px;top:516px;width:587px;height:1px;background:#000;"></div>
<div style="left:51px;top:564px;width:587px;height:1px;background:#000;"></div>
<div style="left:51px;top:612px;width:587px;height:1px;background:#000;"></div>
<div style="left:51px;top:661px;width:587px;height:1px;background:#000;"></div>
<div style="left:51px;top:709px;width:587px;height:1px;background:#000;"></div>
<div style="left:51px;top:757px;width:587px;height:1px;background:#000;"></div>
<div style="left:51px;top:806px;width:587px;height:1px;background:#000;"></div>
<div style="left:51px;top:854px;width:587px;height:1px;background:#000;"></div>
<span class="t" style="left:405.99px;top:367.80px;font-size:15px;line-height:18px;color:#000;font-weight:bold;word-spacing:-0.40px;"><i style="width:68.21px;transform:scaleX(0.9296)">Scorecard</i> <i style="width:15.09px;transform:scaleX(1.0061)">—</i> <i style="width:38.13px;transform:scaleX(0.9144)">Score</i> <i style="width:66.27px;transform:scaleX(0.9933)">Overview</i></span>
<span class="t" style="left:0;top:0;transform-origin:0 0;transform:translate(54.9px,649.8px) rotate(-90deg);font-size:15px;line-height:18px;color:#000;font-weight:bold;word-spacing:-0.40px;"><i style="width:38.13px;transform:scaleX(0.9144)">Score</i> <i style="width:32.39px;transform:scaleX(1.0226)">(1-5)</i></span>
<div style="left:665px;top:518px;width:8px;height:9px;background:#4572a7;"></div>
<span class="t" style="left:678.40px;top:513.17px;font-size:15.1px;line-height:18px;color:#000;word-spacing:-0.43px;"><i style="width:74.67px;transform:scaleX(0.9369)">[EXAMPLE]</i> <i style="width:13.85px;transform:scaleX(0.9706)">AI</i> <i style="width:56.31px;">Strategy</i></span>
<div style="left:665px;top:548px;width:8px;height:9px;background:#aa4643;"></div>
<span class="t" style="left:678.40px;top:543.17px;font-size:15.1px;line-height:18px;color:#000;word-spacing:-0.43px;"><i style="width:74.67px;transform:scaleX(0.9369)">[EXAMPLE]</i> <i style="width:31.81px;transform:scaleX(0.9975)">Data</i> <i style="width:84.19px;transform:scaleX(1.0134)">Foundations</i></span>
<div style="left:665px;top:578px;width:8px;height:9px;background:#89a54e;"></div>
<span class="t" style="left:678.40px;top:573.17px;font-size:15.1px;line-height:18px;color:#000;word-spacing:-0.43px;"><i style="width:74.67px;transform:scaleX(0.9369)">[EXAMPLE]</i> <i style="width:31.81px;transform:scaleX(0.9975)">Data</i> <i style="width:48.36px;transform:scaleX(0.9772)">Privacy</i> <i style="width:11.37px;transform:scaleX(1.1283)">&amp;</i> <i style="width:39.88px;transform:scaleX(0.9700)">Ethics</i></span>
<div style="left:665px;top:608px;width:8px;height:9px;background:#71588f;"></div>
<span class="t" style="left:678.40px;top:603.17px;font-size:15.1px;line-height:18px;color:#000;word-spacing:-0.43px;"><i style="width:74.67px;transform:scaleX(0.9369)">[EXAMPLE]</i> <i style="width:13.85px;transform:scaleX(0.9706)">AI</i> <i style="width:77.78px;transform:scaleX(1.0184)">Technology</i> <i style="width:89.08px;transform:scaleX(1.0309)">Procurement</i></span>
<div style="left:665px;top:638px;width:8px;height:9px;background:#4198af;"></div>
<span class="t" style="left:678.40px;top:633.17px;font-size:15.1px;line-height:18px;color:#000;word-spacing:-0.43px;"><i style="width:74.67px;transform:scaleX(0.9369)">[EXAMPLE]</i> <i style="width:13.85px;transform:scaleX(0.9706)">AI</i> <i style="width:12.58px;transform:scaleX(1.0710)">in</i> <i style="width:75.37px;transform:scaleX(1.0206)">Operations</i></span>
<div style="left:665px;top:668px;width:8px;height:9px;background:#db843d;"></div>
<span class="t" style="left:678.40px;top:663.17px;font-size:15.1px;line-height:18px;color:#000;word-spacing:-0.43px;"><i style="width:74.67px;transform:scaleX(0.9369)">[EXAMPLE]</i> <i style="width:72.04px;transform:scaleX(1.0517)">Workforce</i> <i style="width:105.15px;transform:scaleX(1.0416)">Transformation</i></span>
<div style="left:665px;top:698px;width:8px;height:9px;background:#93a9cf;"></div>
<span class="t" style="left:678.40px;top:693.17px;font-size:15.1px;line-height:18px;color:#000;word-spacing:-0.43px;"><i style="width:74.67px;transform:scaleX(0.9369)">[EXAMPLE]</i> <i style="width:13.85px;transform:scaleX(0.9706)">AI</i> <i style="width:87.81px;transform:scaleX(1.0163)">Performance</i> <i style="width:95.87px;transform:scaleX(1.0389)">Measurement</i></span>
<div style="left:0px;top:906px;width:1895px;height:1px;background:#a0a0a0;"></div>
<div style="left:1894px;top:29px;width:1px;height:877px;background:#ababab;"></div>
<div style="left:1895px;top:0px;width:26px;height:906px;background:#e6e6e6;"></div>
<div style="left:0px;top:907px;width:1921px;height:31px;background:#e6e6e6;"></div>
<div style="left:0px;top:938px;width:1921px;height:1px;background:#c9c9c9;"></div>
<div style="left:0px;top:939px;width:1921px;height:27px;background:#f3f3f3;"></div>
<div style="left:0px;top:965px;width:1921px;height:1px;background:#a6a6a6;"></div>
<div style="left:1920px;top:0px;width:1px;height:966px;background:#111;"></div>
<div style="left:1898px;top:8px;width:19px;height:898px;background:#f3f3f3;"></div>
<div class="sb" style="left:1898px;top:8px;width:17px;height:17px"></div>
<svg style="left:1903px;top:14px" width="9" height="5" viewBox="0 0 9 5"><path d="M0 5H9L4.5 0Z" fill="#222"/></svg>
<div class="sb" style="left:1898px;top:27px;width:17px;height:831px"></div>
<div class="sb" style="left:1898px;top:887px;width:17px;height:17px"></div>
<svg style="left:1903px;top:895px" width="9" height="5" viewBox="0 0 9 5"><path d="M0 0H9L4.5 5Z" fill="#222"/></svg>
<div style="left:1170px;top:913px;width:722px;height:20px;background:#f3f3f3;"></div>
<div class="sb" style="left:1170px;top:913px;width:17px;height:17px"></div>
<svg style="left:1176px;top:918px" width="5" height="9" viewBox="0 0 5 9"><path d="M5 0V9L0 4.5Z" fill="#222"/></svg>
<div class="sb" style="left:1189px;top:913px;width:613px;height:17px"></div>
<div class="sb" style="left:1873px;top:913px;width:17px;height:17px"></div>
<svg style="left:1881px;top:918px" width="5" height="9" viewBox="0 0 5 9"><path d="M0 0V9L5 4.5Z" fill="#222"/></svg>
<div style="left:1150px;top:916px;width:3px;height:3px;background:#b8b8b8;"></div>
<div style="left:1150px;top:921px;width:3px;height:3px;background:#b8b8b8;"></div>
<div style="left:1150px;top:926px;width:3px;height:3px;background:#b8b8b8;"></div>
<svg style="left:30px;top:918px" width="6" height="10" viewBox="0 0 6 10"><path d="M6 0V10L0 5Z" fill="#c3c3c3"/></svg>
<svg style="left:62px;top:918px" width="6" height="10" viewBox="0 0 6 10"><path d="M0 0V10L6 5Z" fill="#c3c3c3"/></svg>
<div style="left:112px;top:910px;width:1px;height:25px;background:#ababab;"></div>
<div style="left:115px;top:909px;width:112px;height:26px;background:#1f3864;"></div>
<span class="t" style="left:125.70px;top:910.65px;font-size:16.6px;line-height:20px;color:#fff;"><i style="width:89.80px;transform:scaleX(1.0582)">Instructions</i></span>
<div style="left:229px;top:906px;width:104px;height:28px;background:#9c9c9c;"></div>
<div style="left:230px;top:906px;width:102px;height:27px;background:#fff;"></div>
<div style="left:232px;top:910px;width:98px;height:22px;background:linear-gradient(#fcfcfc 0%,#f1f3f0 30%,#d3dacf 65%,#adbaa7 100%)"></div>
<div style="left:229px;top:933px;width:104px;height:2px;background:#217346;"></div>
<span class="t" style="left:240.50px;top:910.65px;font-size:16.6px;line-height:20px;color:#217346;font-weight:bold;"><i style="width:79.60px;transform:scaleX(0.9806)">Scorecard</i></span>
<div style="left:335px;top:909px;width:207px;height:26px;background:#1b6b72;"></div>
<span class="t" style="left:350.10px;top:910.65px;font-size:16.6px;line-height:20px;color:#fff;"><i style="width:176.00px;transform:scaleX(1.0316)">Improvement_Priorities</i></span>
<div style="left:544px;top:910px;width:1px;height:25px;background:#ababab;"></div>
<div style="left:547px;top:909px;width:199px;height:26px;background:#c00000;"></div>
<span class="t" style="left:560.70px;top:910.65px;font-size:16.6px;line-height:20px;color:#fff;"><i style="width:171.20px;transform:scaleX(0.9650)">Pro_Tips_and_Mistakes</i></span>
<div style="left:748px;top:910px;width:1px;height:25px;background:#ababab;"></div>
<svg style="left:786px;top:912px" width="22" height="22" viewBox="0 0 22 22"><circle cx="11" cy="10.6" r="9.5" fill="none" stroke="#6a6a6a" stroke-width="1.1"/><path d="M6 10.6H16M11 5.6V15.6" stroke="#6a6a6a" stroke-width="1.6" fill="none"/></svg>
<span class="t" style="left:14.50px;top:945.80px;font-size:12.4px;line-height:15px;color:#444;"><i style="width:35.50px;transform:scaleX(0.9908)">Ready</i></span>
<span class="t" style="left:138.70px;top:945.20px;font-size:12.4px;line-height:15px;color:#333;font-weight:bold;word-spacing:0.08px;"><i style="width:81.63px;transform:scaleX(1.0218)">Accessibility:</i> <i style="width:66.15px;transform:scaleX(1.0218)">Investigate</i></span>
<span class="t" style="left:1430.40px;top:945.80px;font-size:12.4px;line-height:15px;color:#333;word-spacing:0.08px;"><i style="width:41.62px;transform:scaleX(1.0240)">Display</i> <i style="width:45.86px;transform:scaleX(1.0240)">Settings</i></span>
<span class="t" style="left:1878.00px;top:946.30px;font-size:12.4px;line-height:15px;color:#555;"><i style="width:30.50px;transform:scaleX(0.9621)">100%</i></span>
<div style="left:1547px;top:939px;width:50px;height:26px;background:#c6c6c6;"></div>
<svg style="left:1563px;top:943px" width="18" height="18" viewBox="1563 943 18 18"><rect x="1564.5" y="944.5" width="15" height="15" fill="#d2d2d2" stroke="#6a6a6a"/><path d="M1569.5 944.5V959.5M1574.5 944.5V959.5M1564.5 949.5H1579.5M1564.5 954.5H1579.5" fill="none" stroke="#6a6a6a"/></svg>
<svg style="left:1612px;top:943px" width="19" height="17" viewBox="1612 943 19 17"><rect x="1613.5" y="944.5" width="16" height="14" fill="#fafafa" stroke="#6a6a6a"/><rect x="1617.5" y="946.5" width="8" height="10" fill="#fff" stroke="#6a6a6a"/><path d="M1619.3 949.6H1624M1619.3 951.5H1624M1619.3 953.4H1624" stroke="#6a6a6a" stroke-width=".9"/></svg>
<svg style="left:1662px;top:943px" width="19" height="18" viewBox="1662 943 19 18"><rect x="1663.5" y="944.5" width="16" height="15" fill="#fafafa" stroke="#6a6a6a"/><path d="M1663.5 953.5H1673.5V944.5M1668.5 944.5V953.5" fill="none" stroke="#6a6a6a"/></svg>
<div style="left:1704px;top:951px;width:10px;height:1px;background:#444;"></div>
<div style="left:1720px;top:951px;width:125px;height:1px;background:#555;"></div>
<div style="left:1780px;top:945px;width:6px;height:14px;background:#444;"></div>
<div style="left:1851px;top:951px;width:10px;height:1px;background:#444;"></div>
<div style="left:1855px;top:947px;width:1px;height:10px;background:#444;"></div>
<svg style="left:75px;top:942px" width="19" height="19" viewBox="75 942 19 19"><rect x="78.5" y="945.5" width="13" height="13" fill="#fff" stroke="#666"/><rect x="85" y="945" width="7" height="3.5" fill="#666"/><circle cx="80.3" cy="947.4" r="4.3" fill="#f3f3f3"/><circle cx="80.3" cy="947.4" r="3.4" fill="#666"/><path d="M84.2 950.4h1.8M87.2 950.4h1.8M81.2 953.4h1.8M84.2 953.4h1.8M87.2 953.4h1.8M81.2 956.4h1.8M84.2 956.4h1.8M87.2 956.4h1.8" stroke="#666" stroke-width=".9"/></svg>
<svg style="left:114px;top:942px" width="23" height="22" viewBox="114 942 23 22"><path d="M122 945A7.4 7.4 0 0 0 122.66 959.67" fill="none" stroke="#505050" stroke-width="1.25" stroke-dasharray="4.2 1.4"/><path d="M123.5 944V952.3M121.2 950L123.5 952.5L125.8 950M127 950.4H131.6M129.3 948L131.8 950.4L129.3 952.8" fill="none" stroke="#555" stroke-width="1.1"/><path d="M125.3 954L134.6 961.6M134.4 954L125.3 961.6" stroke="#444" stroke-width="1.8"/></svg>
<svg style="left:1408px;top:942px" width="22" height="21" viewBox="1408 942 22 21"><rect x="1409.2" y="943.1" width="18.5" height="12.7" rx="1.6" fill="#505050"/><path d="M1413.1 959.9H1417.6" stroke="#505050" stroke-width="1.5"/><circle cx="1422.5" cy="956.4" r="6.1" fill="#f3f3f3"/><path d="M1427.89 955.33L1427.89 957.47L1426.63 957.60L1426.27 958.47L1427.07 959.46L1425.56 960.97L1424.57 960.17L1423.70 960.53L1423.57 961.79L1421.43 961.79L1421.30 960.53L1420.43 960.17L1419.44 960.97L1417.93 959.46L1418.73 958.47L1418.37 957.60L1417.11 957.47L1417.11 955.33L1418.37 955.20L1418.73 954.33L1417.93 953.34L1419.44 951.83L1420.43 952.63L1421.30 952.27L1421.43 951.01L1423.57 951.01L1423.70 952.27L1424.57 952.63L1425.56 951.83L1427.07 953.34L1426.27 954.33L1426.63 955.20ZM1424.2 956.4A1.7 1.7 0 1 0 1420.8 956.4A1.7 1.7 0 1 0 1424.2 956.4Z" fill="#505050" fill-rule="evenodd"/></svg>
</body></html>
